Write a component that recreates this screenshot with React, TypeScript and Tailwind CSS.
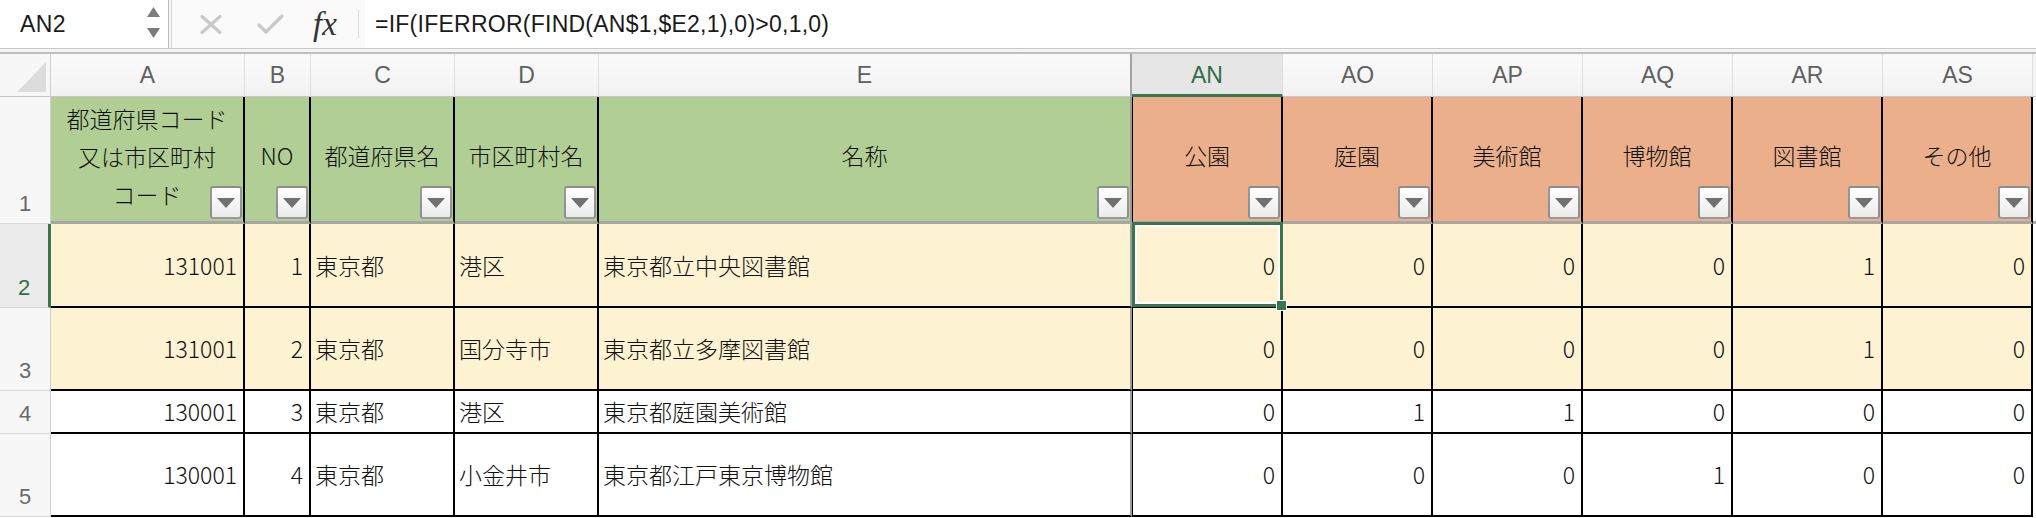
import React from "react";

const CJK = "font-['Noto_Sans_CJK_JP','Noto_Sans',sans-serif] font-light";
const UI = "font-['Liberation_Sans','Arial',sans-serif]";

function FilterBtn() {
  return (
    <div className="absolute right-[1px] bottom-[2px] flex h-[33px] w-[32px] items-center justify-center rounded-[3px] border-2 border-black/40 bg-linear-to-b from-white to-[#ebebeb]">
      <svg width="18" height="10" viewBox="0 0 18 10">
        <path d="M0 0H18L9 10Z" fill="#707070" />
      </svg>
    </div>
  );
}

type Row = {
  n: number;
  a: string;
  b: string;
  c: string;
  d: string;
  e: string;
  v: number[];
  yellow: boolean;
};

const rows: Row[] = [
  { n: 2, a: "131001", b: "1", c: "東京都", d: "港区", e: "東京都立中央図書館", v: [0, 0, 0, 0, 1, 0], yellow: true },
  { n: 3, a: "131001", b: "2", c: "東京都", d: "国分寺市", e: "東京都立多摩図書館", v: [0, 0, 0, 0, 1, 0], yellow: true },
  { n: 4, a: "130001", b: "3", c: "東京都", d: "港区", e: "東京都庭園美術館", v: [0, 1, 1, 0, 0, 0], yellow: false },
  { n: 5, a: "130001", b: "4", c: "東京都", d: "小金井市", e: "東京都江戸東京博物館", v: [0, 0, 0, 1, 0, 0], yellow: false },
];

const colLetters = ["A", "B", "C", "D", "E"];
const rightLetters = ["AO", "AP", "AQ", "AR", "AS"];
const greenHeads = ["NO", "都道府県名", "市区町村名"];
const orangeHeads = ["公園", "庭園", "美術館", "博物館", "図書館", "その他"];

function DataCell({
  yellow,
  align,
  children,
  freeze,
  leftBlack,
}: {
  yellow: boolean;
  align: "l" | "r";
  children?: React.ReactNode;
  freeze?: boolean;
  leftBlack?: boolean;
}) {
  const bg = yellow ? "bg-[#fdf2d2]" : "bg-white";
  const al = align === "r" ? "justify-end pr-[6px]" : "justify-start pl-[4px]";
  const rb = freeze ? "border-r-2 border-r-[#9b9b9b]" : "border-r-2 border-r-black";
  const lb = leftBlack ? "border-l border-l-black" : "";
  return (
    <div className={`flex items-center whitespace-nowrap border-b-2 border-b-black text-[23px] text-[#111] ${bg} ${al} ${rb} ${lb}`}>
      {children}
    </div>
  );
}

export default function App() {
  return (
    <div className={`h-[518px] w-[2036px] overflow-hidden bg-white ${UI}`}>
      {/* Formula bar */}
      <div className="flex h-[48px] bg-[#fafafa]">
        <div className="relative flex w-[168px] items-center bg-white pl-[20px] text-[23px] tracking-[0.4px] text-[#1a1a1a]">
          AN2
          <svg className="absolute left-[147px] top-[7px]" width="13" height="10" viewBox="0 0 13 10">
            <path d="M6.5 0L13 10H0Z" fill="#7c7c7c" />
          </svg>
          <svg className="absolute left-[147px] top-[28px]" width="13" height="10" viewBox="0 0 13 10">
            <path d="M0 0H13L6.5 10Z" fill="#7c7c7c" />
          </svg>
        </div>
        <div className="w-[1px] bg-[#bdbdbd]" />
        <div className="w-[2px] bg-[#f4f4f4]" />
        <div className="w-[1px] bg-[#d6d6d6]" />
        <div className="flex flex-1 items-center">
          <div className="ml-[28px] flex w-[22px] items-center justify-center">
            <svg width="22" height="19" viewBox="0 0 22 19">
              <path d="M2 1.5L20 17.5M20 1.5L2 17.5" stroke="#c9c9c9" strokeWidth="3.2" strokeLinecap="round" />
            </svg>
          </div>
          <div className="ml-[35px] flex w-[27px] items-center justify-center">
            <svg width="27" height="20" viewBox="0 0 27 20">
              <path d="M2 11L9 18L25 2" stroke="#c9c9c9" strokeWidth="3.2" fill="none" strokeLinecap="round" strokeLinejoin="round" />
            </svg>
          </div>
          <div className="ml-[29px] w-[32px] font-['Liberation_Serif',serif] text-[33px] italic leading-none text-[#333]">
            fx
          </div>
          <div className="ml-[13px] h-[28px] w-[1px] bg-[#dcdcdc]" />
          <div className="ml-[6px] flex h-full flex-1 items-center bg-white pl-[10px] text-[23px] tracking-[0.25px] text-[#1a1a1a]">
            =IF(IFERROR(FIND(AN$1,$E2,1),0)&gt;0,1,0)
          </div>
        </div>
      </div>
      <div className="h-[1px] bg-[#c8c8c8]" />
      <div className="h-[3px] bg-[#f5f5f5]" />
      <div className="h-[2px] bg-[#bfbfbf]" />

      {/* Sheet grid */}
      <div className="grid grid-cols-[51px_194px_66px_144px_144px_533px_151px_150px_150px_150px_150px_150px_3px] grid-rows-[43px_127px_84px_83px_43px_83px]">
        {/* Column header row */}
        <div className="relative border-b border-r border-b-[#c6c6c6] border-r-[#cfcfcf] bg-[#f7f7f7]">
          <svg className="absolute left-[17px] top-[8px]" width="29" height="30" viewBox="0 0 29 30">
            <path d="M29 0V30H0Z" fill="#dcdcdc" />
          </svg>
        </div>
        {colLetters.map((l) => (
          <div
            key={l}
            className={`flex items-center justify-center border-b border-b-[#c6c6c6] bg-linear-to-b from-[#fbfbfb] to-[#f2f2f2] text-[23px] text-[#606060] ${
              l === "E" ? "border-r-2 border-r-[#a3a3a3]" : "border-r border-r-[#dedede]"
            }`}
          >
            {l}
          </div>
        ))}
        <div className="flex items-center justify-center border-b-[3px] border-r border-b-[#3a7550] border-r-[#dedede] bg-[#e6e6e6] pt-[2px] text-[23px] text-[#2f6f47]">
          AN
        </div>
        {rightLetters.map((l) => (
          <div
            key={l}
            className="flex items-center justify-center border-b border-r border-b-[#c6c6c6] border-r-[#dedede] bg-linear-to-b from-[#fbfbfb] to-[#f2f2f2] text-[23px] text-[#606060]"
          >
            {l}
          </div>
        ))}
        <div className="border-b border-b-[#c6c6c6] bg-[#f5f5f5]" />

        {/* Row 1 : headings */}
        <div className="flex items-end justify-center border-b border-r border-b-[#dadada] border-r-[#cfcfcf] bg-[#f7f7f7] pb-[3px] text-[22px] text-[#6a6a6a]">
          1
        </div>
        <div className={`relative flex items-center justify-center border-b-[3px] border-r-2 border-b-[#a6a6a6] border-r-black bg-[#b1cf95] pb-[7px] text-center text-[23px] leading-[38px] text-[#111] ${CJK}`}>
          <div>
            都道府県コード
            <br />
            又は市区町村
            <br />
            コード
          </div>
          <FilterBtn />
        </div>
        {greenHeads.map((h) => (
          <div
            key={h}
            className={`relative flex items-center justify-center border-b-[3px] border-r-2 border-b-[#a6a6a6] border-r-black bg-[#b1cf95] pb-[7px] text-[23px] text-[#111] ${CJK}`}
          >
            {h}
            <FilterBtn />
          </div>
        ))}
        <div className={`relative flex items-center justify-center border-b-[3px] border-r-2 border-b-[#a6a6a6] border-r-[#9b9b9b] bg-[#b1cf95] pb-[7px] text-[23px] text-[#111] ${CJK}`}>
          名称
          <FilterBtn />
        </div>
        {orangeHeads.map((h, i) => (
          <div
            key={h}
            className={`relative flex items-center justify-center border-b-[3px] border-r-2 border-b-[#a6a6a6] border-r-black bg-[#ebb08b] pb-[7px] text-[23px] text-[#111] ${CJK} ${
              i === 0 ? "border-l border-l-black" : ""
            }`}
          >
            {h}
            <FilterBtn />
          </div>
        ))}
        <div className="border-b-[3px] border-b-[#a6a6a6] bg-white" />

        {/* Data rows */}
        {rows.map((r) => (
          <React.Fragment key={r.n}>
            <div
              className={`flex items-end justify-center border-b pb-[3px] text-[22px] ${
                r.n === 2
                  ? "border-r-[3px] border-b-[#d6d6d6] border-r-[#3a7550] bg-[#ebebeb] text-[#2f6f47]"
                  : "border-r border-b-[#dadada] border-r-[#cfcfcf] bg-[#f7f7f7] text-[#6a6a6a]"
              }`}
            >
              {r.n}
            </div>
            <DataCell yellow={r.yellow} align="r">
              <span className={CJK}>{r.a}</span>
            </DataCell>
            <DataCell yellow={r.yellow} align="r">
              <span className={CJK}>{r.b}</span>
            </DataCell>
            <DataCell yellow={r.yellow} align="l">
              <span className={CJK}>{r.c}</span>
            </DataCell>
            <DataCell yellow={r.yellow} align="l">
              <span className={CJK}>{r.d}</span>
            </DataCell>
            <DataCell yellow={r.yellow} align="l" freeze>
              <span className={CJK}>{r.e}</span>
            </DataCell>
            {r.v.map((v, i) =>
              r.n === 2 && i === 0 ? (
                <div
                  key={i}
                  className="relative flex items-center justify-end border-b-2 border-l border-r-2 border-b-black border-l-black border-r-black bg-[#fdf2d2] pr-[6px] text-[23px] text-[#111]"
                >
                  <span className={CJK}>{v}</span>
                  <div className="absolute -bottom-[1px] -left-[1px] -right-[2px] -top-[2px] z-10 border-[3px] border-[#3a7550] shadow-[inset_0_0_0_2px_white]" />
                  <div className="absolute -bottom-[5px] -right-[6px] z-20 h-[11px] w-[11px] border border-white bg-[#3a7550]" />
                </div>
              ) : (
                <DataCell key={i} yellow={r.yellow} align="r" leftBlack={i === 0}>
                  <span className={CJK}>{v}</span>
                </DataCell>
              )
            )}
            <div className="bg-white" />
          </React.Fragment>
        ))}
      </div>
    </div>
  );
}
